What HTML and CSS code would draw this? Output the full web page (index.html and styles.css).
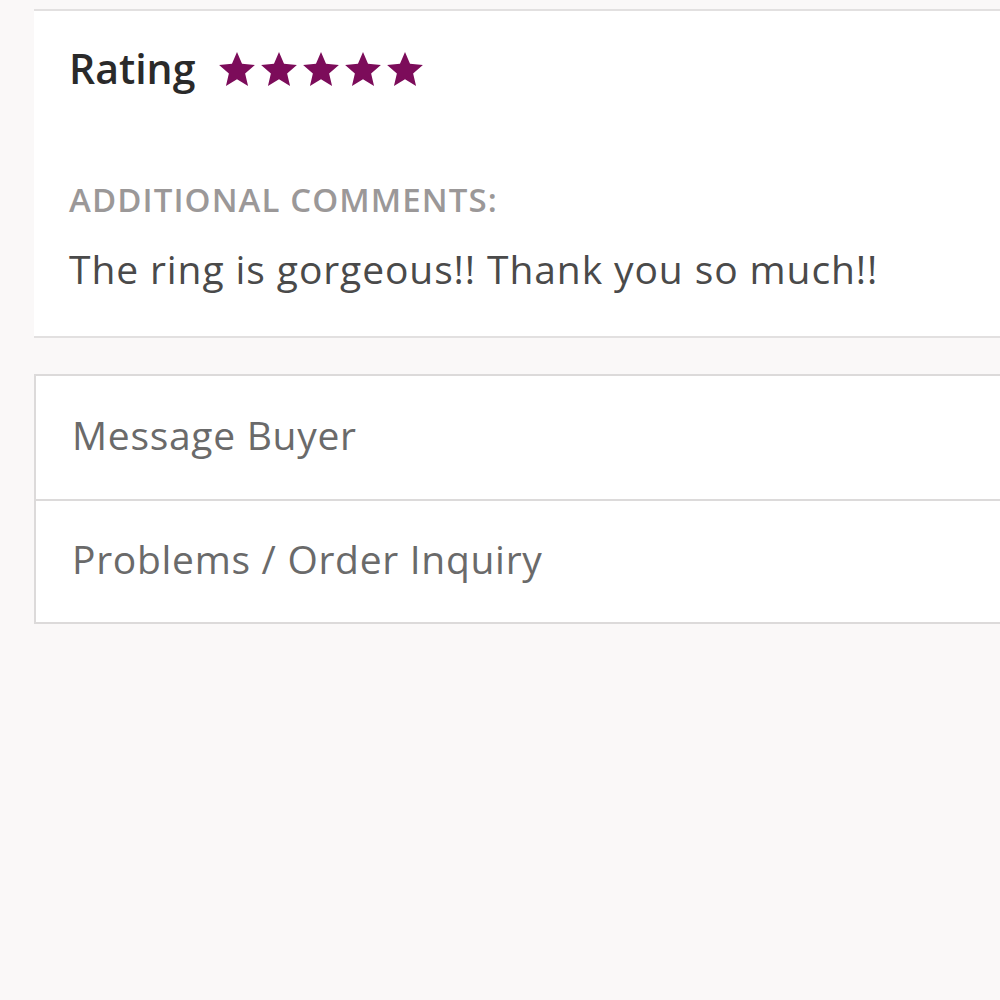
FILE: index.html
```html
<!DOCTYPE html>
<html>
<head>
<meta charset="utf-8">
<link rel="stylesheet" href="styles.css">
</head>
<body>
<div class="page">
  <section class="review">
    <div class="rating-row">
      <span class="rating-label">Rating</span>
      <span class="stars">
        <svg class="star" viewBox="2 2 20 19"><path d="M12 17.27L18.18 21l-1.64-7.03L22 9.24l-7.19-.61L12 2 9.19 8.63 2 9.24l5.46 4.73L5.82 21z"/></svg>
        <svg class="star" viewBox="2 2 20 19"><path d="M12 17.27L18.18 21l-1.64-7.03L22 9.24l-7.19-.61L12 2 9.19 8.63 2 9.24l5.46 4.73L5.82 21z"/></svg>
        <svg class="star" viewBox="2 2 20 19"><path d="M12 17.27L18.18 21l-1.64-7.03L22 9.24l-7.19-.61L12 2 9.19 8.63 2 9.24l5.46 4.73L5.82 21z"/></svg>
        <svg class="star" viewBox="2 2 20 19"><path d="M12 17.27L18.18 21l-1.64-7.03L22 9.24l-7.19-.61L12 2 9.19 8.63 2 9.24l5.46 4.73L5.82 21z"/></svg>
        <svg class="star" viewBox="2 2 20 19"><path d="M12 17.27L18.18 21l-1.64-7.03L22 9.24l-7.19-.61L12 2 9.19 8.63 2 9.24l5.46 4.73L5.82 21z"/></svg>
      </span>
    </div>
    <div class="comments-label">ADDITIONAL COMMENTS:</div>
    <div class="comment">The ring is gorgeous!! Thank you so much!!</div>
  </section>
  <nav class="actions">
    <div class="action">Message Buyer</div>
    <div class="action">Problems / Order Inquiry</div>
  </nav>
</div>
</body>
</html>
```
FILE: styles.css
```css
html, body {
  margin: 0;
  padding: 0;
  background: #faf8f8;
  font-family: "Open Sans", sans-serif;
}
.page {
  padding-top: 9px;
  padding-left: 34px;
}
.review {
  background: #fff;
  border-top: 2px solid #e2e0e0;
  border-bottom: 2px solid #e2e0e0;
  padding: 0 0 0 35px;
  height: 329px;
  box-sizing: border-box;
}
.rating-row {
  display: flex;
  align-items: center;
  height: 120px;
  padding-bottom: 6px;
  box-sizing: border-box;
}
.rating-label {
  font-size: 41px;
  font-weight: 600;
  color: #2a2a2a;
  margin-right: 24px;
}
.stars {
  display: flex;
  gap: 6px;
  margin-top: 2px;
}
.star {
  width: 36px;
  height: 34px;
  fill: #7c0c5a;
}
.comments-label {
  margin-top: 49px;
  font-size: 33px;
  font-weight: 600;
  color: #9b9898;
  letter-spacing: 1.1px;
  line-height: 40px;
}
.comment {
  margin-top: 27px;
  font-size: 39px;
  color: #4a4a4a;
  letter-spacing: 0.9px;
  line-height: 44px;
}
.actions {
  margin-top: 36px;
  background: #fff;
  border: 2px solid #dcdada;
  border-right: none;
}
.action {
  height: 123px;
  display: flex;
  align-items: center;
  padding-left: 36px;
  padding-bottom: 6px;
  font-size: 39px;
  letter-spacing: 0.7px;
  color: #6a6a6a;
  box-sizing: border-box;
}
.action + .action {
  border-top: 2px solid #dcdada;
}
```
